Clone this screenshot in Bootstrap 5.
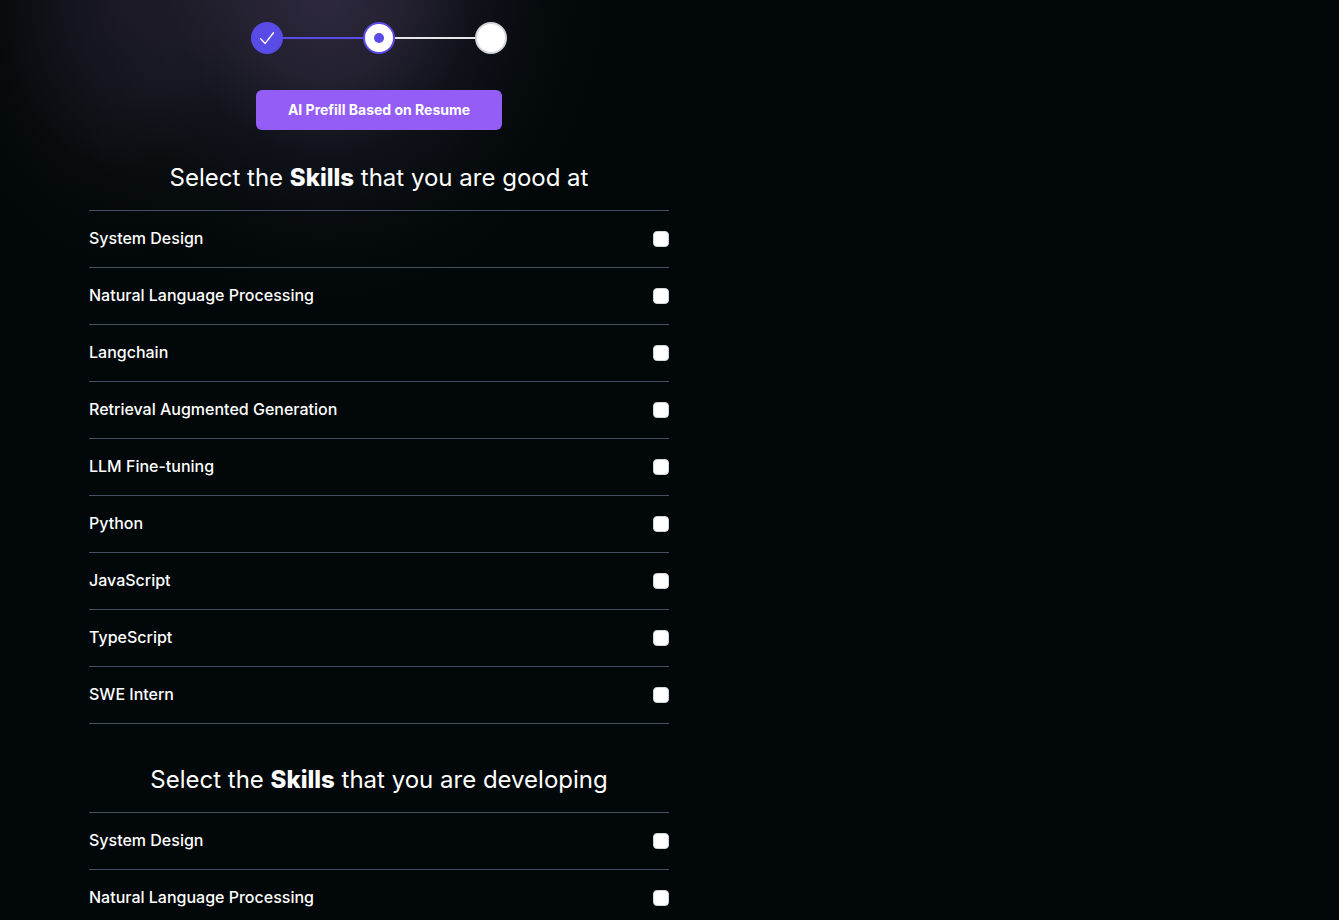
<!DOCTYPE html>
<html lang="en">
<head>
<meta charset="utf-8">
<meta name="viewport" content="width=device-width, initial-scale=1">
<title>Select your skills</title>
<link href="https://cdn.jsdelivr.net/npm/bootstrap@5.3.0/dist/css/bootstrap.min.css" rel="stylesheet">
<style>
  body {
    font-family: Inter, "Liberation Sans", sans-serif;
    color: #fff;
    background:
      radial-gradient(ellipse 280px 310px at 325px -10px, rgba(125, 102, 158, .36) 0%, rgba(114, 92, 142, .29) 30%, rgba(90, 78, 115, .15) 54%, rgba(60, 65, 80, .05) 80%, transparent 100%),
      radial-gradient(ellipse 170px 260px at 115px 0, rgba(130, 95, 160, .17) 0%, rgba(120, 95, 135, .12) 40%, rgba(80, 75, 80, .05) 70%, transparent 100%),
      #020709;
  }
  .page-wrap { max-width: 1161px; }
  .form-column { padding-top: 22px; max-width: 580px; }
  .step-dot {
    width: 32px;
    height: 32px;
    border: 2px solid #d1d5db;
    background: #fff;
  }
  .step-done { background: #594be6; border-color: #594be6; }
  .step-current { border-color: #594be6; }
  .step-current span { width: 10px; height: 10px; background: #594be6; }
  .step-line { width: 80px; height: 2px; background: #e5e7eb; }
  .step-line-done { background: #594be6; }
  .btn-prefill {
    --bs-btn-color: #fff;
    --bs-btn-bg: #935df6;
    --bs-btn-hover-color: #fff;
    --bs-btn-hover-bg: #824be8;
    --bs-btn-active-color: #fff;
    --bs-btn-active-bg: #7440d8;
    --bs-btn-border-width: 0;
    --bs-btn-border-radius: 6px;
    --bs-btn-font-size: 14px;
    --bs-btn-font-weight: 700;
    --bs-btn-line-height: 24px;
    --bs-btn-padding-y: 8px;
    --bs-btn-padding-x: 32px;
    margin-top: 36px;
    margin-bottom: 32px;
  }
  .skills-title { font-size: 24px; line-height: 32px; font-weight: 400; }
  .skills-title strong { font-weight: 800; }
  .skills-list { border-top: 1px solid #475062; margin-bottom: 40px; }
  .skill-row {
    border-bottom: 1px solid #475062;
    font-size: 16px;
    font-weight: 500;
  }
  .skill-row label { line-height: 22px; padding-bottom: 2px; }
  .skill-row .form-check-input {
    width: 16px;
    height: 16px;
    background-color: #fff;
    border-color: #d1d5db;
    border-radius: 4px;
  }
  .skill-row .form-check-input:checked { background-color: #594be6; border-color: #594be6; }
</style>
</head>
<body>
<main class="container-fluid page-wrap p-0">
  <div class="row g-0">
    <div class="col-6 form-column">
      <nav aria-label="Progress">
        <ol class="list-unstyled d-flex justify-content-center align-items-center mb-0">
          <li class="step-dot step-done rounded-circle d-flex align-items-center justify-content-center">
            <svg width="20" height="20" viewBox="0 0 20 20" fill="none" stroke="#fff" stroke-width="1.4" stroke-linecap="round" stroke-linejoin="round" role="img" aria-label="Completed"><path d="M3.6 10.8l4.6 4.6 8.3-10.7"/></svg>
          </li>
          <li class="step-line step-line-done" aria-hidden="true"></li>
          <li class="step-dot step-current rounded-circle d-flex align-items-center justify-content-center" aria-current="step"><span class="rounded-circle"></span></li>
          <li class="step-line" aria-hidden="true"></li>
          <li class="step-dot rounded-circle"></li>
        </ol>
      </nav>
      <div class="d-flex justify-content-center">
        <button type="button" class="btn btn-prefill">AI Prefill Based on Resume</button>
      </div>

      <h2 class="skills-title text-center mb-3">Select the <strong>Skills</strong> that you are good at</h2>
      <div class="skills-list">
        <div class="skill-row d-flex align-items-center py-3"><label class="flex-grow-1" for="good-1">System Design</label><input class="form-check-input m-0" type="checkbox" id="good-1"></div>
        <div class="skill-row d-flex align-items-center py-3"><label class="flex-grow-1" for="good-2">Natural Language Processing</label><input class="form-check-input m-0" type="checkbox" id="good-2"></div>
        <div class="skill-row d-flex align-items-center py-3"><label class="flex-grow-1" for="good-3">Langchain</label><input class="form-check-input m-0" type="checkbox" id="good-3"></div>
        <div class="skill-row d-flex align-items-center py-3"><label class="flex-grow-1" for="good-4">Retrieval Augmented Generation</label><input class="form-check-input m-0" type="checkbox" id="good-4"></div>
        <div class="skill-row d-flex align-items-center py-3"><label class="flex-grow-1" for="good-5">LLM Fine-tuning</label><input class="form-check-input m-0" type="checkbox" id="good-5"></div>
        <div class="skill-row d-flex align-items-center py-3"><label class="flex-grow-1" for="good-6">Python</label><input class="form-check-input m-0" type="checkbox" id="good-6"></div>
        <div class="skill-row d-flex align-items-center py-3"><label class="flex-grow-1" for="good-7">JavaScript</label><input class="form-check-input m-0" type="checkbox" id="good-7"></div>
        <div class="skill-row d-flex align-items-center py-3"><label class="flex-grow-1" for="good-8">TypeScript</label><input class="form-check-input m-0" type="checkbox" id="good-8"></div>
        <div class="skill-row d-flex align-items-center py-3"><label class="flex-grow-1" for="good-9">SWE Intern</label><input class="form-check-input m-0" type="checkbox" id="good-9"></div>
      </div>

      <h2 class="skills-title text-center mb-3">Select the <strong>Skills</strong> that you are developing</h2>
      <div class="skills-list">
        <div class="skill-row d-flex align-items-center py-3"><label class="flex-grow-1" for="dev-1">System Design</label><input class="form-check-input m-0" type="checkbox" id="dev-1"></div>
        <div class="skill-row d-flex align-items-center py-3"><label class="flex-grow-1" for="dev-2">Natural Language Processing</label><input class="form-check-input m-0" type="checkbox" id="dev-2"></div>
      </div>
    </div>
  </div>
</main>
<script src="https://cdn.jsdelivr.net/npm/bootstrap@5.3.0/dist/js/bootstrap.bundle.min.js"></script>
</body>
</html>
